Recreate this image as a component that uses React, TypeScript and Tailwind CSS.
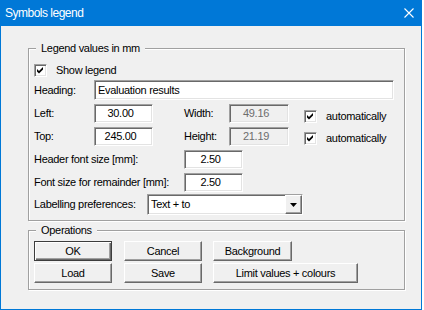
import React from "react";

/* classic 3D frames */
const sunken =
  "border border-t-[#a0a0a0] border-l-[#a0a0a0] border-b-white border-r-white shadow-[inset_1px_1px_0_#696969,inset_-1px_-1px_0_#e3e3e3]";
const raised =
  "border border-t-white border-l-white border-b-[#696969] border-r-[#696969] shadow-[inset_-1px_-1px_0_#a0a0a0]";

const Check = () => (
  <div className={`w-[13px] h-[13px] shrink-0 bg-white ${sunken}`}>
    <svg width="11" height="11" viewBox="0 0 11 11" className="block">
      <polygon points="2,4 4,6 8,2 8,4.5 4,8.5 2,6.5" fill="#000" />
    </svg>
  </div>
);

const Edit = ({
  value,
  className,
}: {
  value: string;
  className: string;
}) => (
  <div className={`${sunken} flex items-center leading-[13px] ${className}`}>
    {value}
  </div>
);

const Button = ({
  children,
  className,
  isDefault,
}: {
  children: React.ReactNode;
  className: string;
  isDefault?: boolean;
}) => (
  <div
    className={`h-[20px] flex items-center justify-center leading-[13px] ${
      isDefault
        ? "border border-[#3c3c3c] shadow-[inset_1px_1px_0_#fff,inset_-1px_-1px_0_#696969,inset_-2px_-2px_0_#a0a0a0]"
        : raised
    } ${className}`}
  >
    {children}
  </div>
);

const GroupBox = ({
  title,
  className,
  children,
}: {
  title: string;
  className: string;
  children: React.ReactNode;
}) => (
  <div
    className={`relative ml-[27px] w-[377px] border border-[#a0a0a0] shadow-[inset_1px_1px_0_#fff,1px_1px_0_#fff] pl-[5px] ${className}`}
  >
    <span className="absolute left-[7px] -top-[8px] bg-[#f0f0f0] px-[5px] leading-[14px]">
      {title}
    </span>
    {children}
  </div>
);

export default function App() {
  return (
    <div className="w-[424px] h-[310px] bg-white font-['Liberation_Sans',Arial,sans-serif] text-[11px] tracking-[-0.3px] text-black">
      <div className="w-[422px] h-[310px] flex flex-col bg-[#f0f0f0] border-x border-b border-[#0078d7]">
        {/* Title bar */}
        <div className="h-[26px] shrink-0 bg-[#0078d7] flex items-center justify-between pl-[4px] pr-[7px]">
          <span className="text-white text-[12px] tracking-[-0.5px] leading-[16px]">
            Symbols legend
          </span>
          <svg width="10" height="10" viewBox="0 0 10 10">
            <path d="M0.5 0.5 L9.5 9.5 M9.5 0.5 L0.5 9.5" stroke="#fff" strokeWidth="1.1" />
          </svg>
        </div>

        {/* Legend values */}
        <GroupBox title="Legend values in mm" className="mt-[22px] h-[173px] pt-[15px]">
          <div className="flex items-center h-[13px]">
            <Check />
            <span className="ml-[9px] leading-[13px]">Show legend</span>
          </div>

          <div className="mt-[3px] flex items-center h-[20px]">
            <span className="w-[60px]">Heading:</span>
            <Edit value="Evaluation results" className="w-[300px] h-[20px] bg-white pl-[3px]" />
          </div>

          <div className="mt-[4px] flex items-center h-[19px]">
            <span className="w-[60px]">Left:</span>
            <Edit value="30.00" className="w-[59px] h-[19px] bg-white justify-center pr-[6px]" />
            <span className="ml-[31px] w-[45px]">Width:</span>
            <Edit value="49.16" className="w-[60px] h-[19px] justify-center pr-[6px] text-[#6d6d6d]" />
            <div className="self-start mt-[6px] ml-[15px] flex items-center">
              <Check />
              <span className="ml-[9px] leading-[13px]">automatically</span>
            </div>
          </div>

          <div className="mt-[4px] flex items-center h-[19px]">
            <span className="w-[60px]">Top:</span>
            <Edit value="245.00" className="w-[59px] h-[19px] bg-white justify-center pr-[6px]" />
            <span className="ml-[31px] w-[45px]">Height:</span>
            <Edit value="21.19" className="w-[60px] h-[19px] justify-center pr-[6px] text-[#6d6d6d]" />
            <div className="self-start mt-[5px] ml-[15px] flex items-center">
              <Check />
              <span className="ml-[9px] leading-[13px]">automatically</span>
            </div>
          </div>

          <div className="mt-[4px] flex items-center h-[19px]">
            <span className="w-[150px]">Header font size [mm]:</span>
            <Edit value="2.50" className="w-[59px] h-[19px] bg-white justify-center pr-[6px]" />
          </div>

          <div className="mt-[4px] flex items-center h-[19px]">
            <span className="w-[150px]">Font size for remainder [mm]:</span>
            <Edit value="2.50" className="w-[59px] h-[19px] bg-white justify-center pr-[6px]" />
          </div>

          <div className="mt-[2px] flex items-center h-[21px]">
            <span className="w-[113px]">Labelling preferences:</span>
            <div className={`w-[156px] h-[21px] bg-white flex items-center ${sunken}`}>
              <span className="flex-1 pl-[3px] leading-[13px]">Text + to</span>
              <div className={`w-[17px] h-full bg-[#f0f0f0] flex items-center justify-center ${raised}`}>
                <svg width="7" height="4" viewBox="0 0 7 4">
                  <polygon points="0,0 7,0 3.5,4" fill="#000" />
                </svg>
              </div>
            </div>
          </div>
        </GroupBox>

        {/* Operations */}
        <GroupBox title="Operations" className="mt-[9px] h-[60px] pt-[10px]">
          <div className="flex">
            <Button isDefault className="w-[78px]">OK</Button>
            <Button className="ml-[12px] w-[78px]">Cancel</Button>
            <Button className="ml-[11px] w-[79px]">Background</Button>
          </div>
          <div className="mt-[2px] flex">
            <Button className="w-[78px]">Load</Button>
            <Button className="ml-[12px] w-[78px]">Save</Button>
            <Button className="ml-[11px] w-[145px]">Limit values + colours</Button>
          </div>
        </GroupBox>
      </div>
    </div>
  );
}
